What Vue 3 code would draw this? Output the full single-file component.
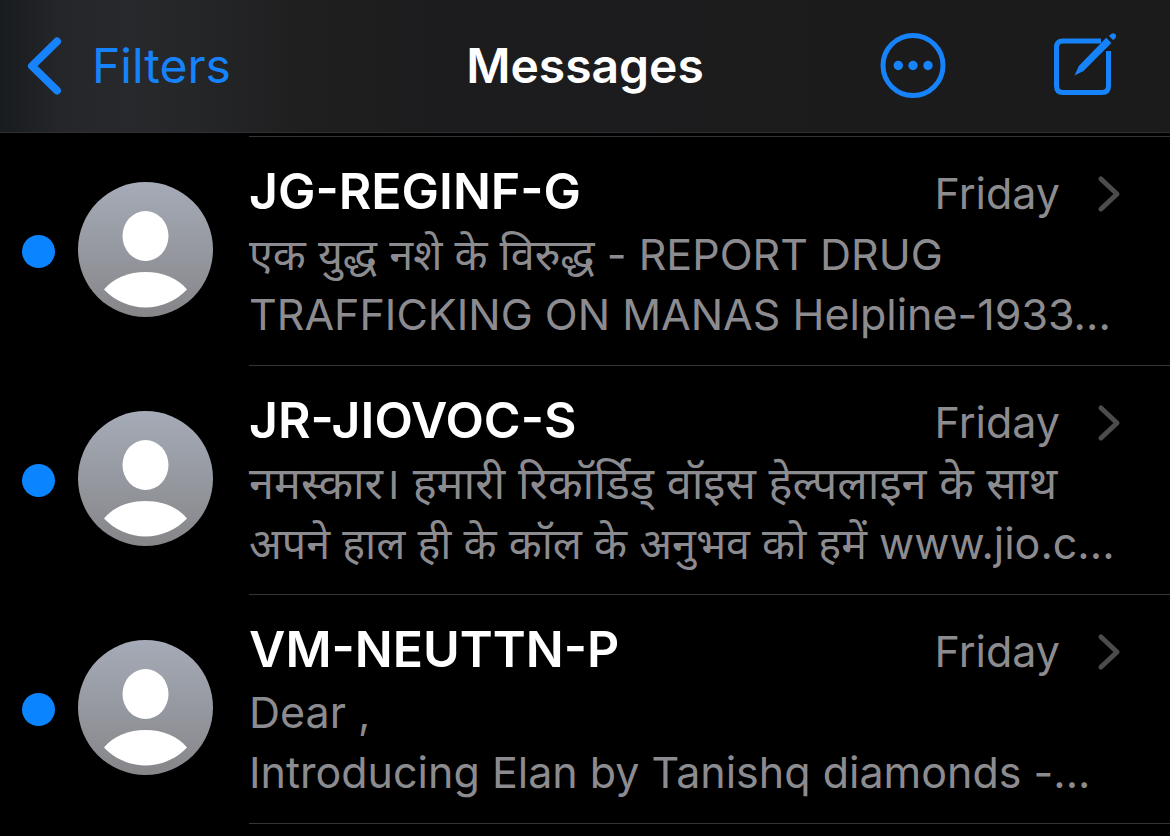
<script setup>
const conversations = [
  {
    sender: 'JG-REGINF-G',
    day: 'Friday',
    lines: [
      { text: 'एक युद्ध नशे के विरुद्ध - REPORT DRUG' },
      { text: 'TRAFFICKING ON MANAS Helpline-1933...' },
    ],
  },
  {
    sender: 'JR-JIOVOC-S',
    day: 'Friday',
    lines: [
      { text: 'नमस्कार। हमारी रिकॉर्डिड् वॉइस हेल्पलाइन के साथ', lang: 'hi' },
      { text: 'अपने हाल ही के कॉल के अनुभव को हमें www.jio.c...' },
    ],
  },
  {
    sender: 'VM-NEUTTN-P',
    day: 'Friday',
    lines: [{ text: 'Dear ,' }, { text: 'Introducing Elan by Tanishq diamonds -...' }],
  },
]
</script>

<template>
  <div class="screen">
    <header class="bar">
      <button class="back" type="button">
        <svg class="back-icon" width="36" height="60" viewBox="0 0 36 60" aria-hidden="true">
          <path d="M31 5.500 6 30 31 54.500" />
        </svg>
        <span>Filters</span>
      </button>
      <h1 class="title">Messages</h1>
      <div class="actions">
        <button class="action" type="button" aria-label="More options">
          <svg width="66" height="66" viewBox="0 0 66 66" aria-hidden="true">
            <circle class="outline" cx="33" cy="32.500" r="30" />
            <circle class="solid" cx="18.300" cy="32.500" r="4.700" />
            <circle class="solid" cx="33" cy="32.500" r="4.700" />
            <circle class="solid" cx="48" cy="32.500" r="4.700" />
          </svg>
        </button>
        <button class="action" type="button" aria-label="New message">
          <svg width="66" height="66" viewBox="0 0 66 66" aria-hidden="true">
            <path class="outline" d="M48 8H10Q3.500 8 3.500 14.500V53Q3.500 59.500 10 59.500H49Q55.500 59.500 55.500 53V18" />
            <path class="solid" d="M53.200 4.800 58.400 10 30.500 38 21.500 42.500 25.800 33Z" />
            <path class="solid" d="M56 3 58.500 .700Q60.500-.500 62.200 1.200 63.800 3 62.600 4.800L60.300 7.300Z" />
          </svg>
        </button>
      </div>
    </header>

    <ul class="list">
      <li v-for="item in conversations" :key="item.sender">
        <a class="row" href="#">
          <span class="unread" aria-label="Unread"></span>
          <svg class="avatar" width="135" height="135" viewBox="0 0 135 135" aria-hidden="true">
            <defs>
              <linearGradient :id="'shade-' + item.sender" x1="0" y1="0" x2="0" y2="1">
                <stop offset="0" stop-color="#a5abb7" />
                <stop offset="1" stop-color="#868689" />
              </linearGradient>
            </defs>
            <circle cx="67.500" cy="67.500" r="67.500" :fill="'url(#shade-' + item.sender + ')'" />
            <ellipse cx="67.500" cy="54" rx="23" ry="25" fill="#fff" />
            <path d="M26 107.500C35 96 51 90 67.500 90S100 96 109 107.500C98 119 83 125.500 67.500 125.500S37 119 26 107.500Z" fill="#fff" />
          </svg>
          <span class="content">
            <span class="heading">
              <strong class="sender">{{ item.sender }}</strong>
              <span class="day">{{ item.day }}</span>
              <svg class="chevron" width="24" height="38" viewBox="0 0 24 38" aria-hidden="true">
                <path d="M4 4 20 19 4 34" />
              </svg>
            </span>
            <span v-for="line in item.lines" :key="line.text" class="line" :lang="line.lang">{{ line.text }}</span>
          </span>
        </a>
      </li>
    </ul>
  </div>
</template>

<style>
body {
  background: #000;
}
</style>

<style scoped>
.screen {
  min-height: 100vh;
  background: #000;
  color: #fff;
  font-family: Inter, "Noto Sans", "Noto Sans Devanagari", sans-serif;
  overflow-x: hidden;
}

.bar {
  display: grid;
  grid-template-columns: 1fr auto 1fr;
  align-items: center;
  height: 132px;
  padding: 0 26px;
  border-bottom: 1px solid #303032;
  background: linear-gradient(90deg, #181b1f 0, #242629 60px, #28292c 130px, #252628 190px, #1f1f20 300px, #1c1c1e 450px, #1b1b1c 100%);
}

button {
  display: flex;
  align-items: center;
  padding: 0;
  border: 0;
  background: none;
  color: #1683fb;
  font: inherit;
}

.back {
  gap: 30px;
  font-size: 48px;
  line-height: 60px;
}

.back-icon path {
  fill: none;
  stroke: currentColor;
  stroke-width: 8;
  stroke-linecap: round;
  stroke-linejoin: round;
}

.title {
  margin: 0;
  font-size: 48px;
  line-height: 60px;
  font-weight: 600;
}

.actions {
  display: flex;
  justify-content: flex-end;
  gap: 107px;
  padding-right: 25px;
}

.outline {
  fill: none;
  stroke: currentColor;
  stroke-width: 5;
}

.solid {
  fill: currentColor;
}

.list {
  margin: 0;
  padding: 3px 0 0;
  list-style: none;
}

.row {
  display: flex;
  align-items: center;
  padding-left: 22px;
  color: inherit;
  text-decoration: none;
}

.unread {
  flex: none;
  width: 33px;
  height: 33px;
  margin-right: 23px;
  border-radius: 50%;
  background: #0a84ff;
}

.avatar {
  flex: none;
  margin: 0 36px 4px 0;
}

.content {
  flex: 1;
  min-width: 0;
  padding: 24px 49px 21px 0;
  border-bottom: 1px solid #343436;
}

li:first-child .content {
  border-top: 1px solid #343436;
}

.heading {
  display: flex;
  align-items: baseline;
  height: 60px;
  margin-bottom: 3px;
  line-height: 60px;
}

.sender {
  flex: 1;
  font-size: 50px;
  font-weight: 600;
}

.day {
  margin-right: 37px;
  color: #8c8c90;
  font-size: 43px;
}

.chevron {
  flex: none;
  align-self: flex-end;
  margin-bottom: 8px;
}

.chevron path {
  fill: none;
  stroke: #4c4c4e;
  stroke-width: 5;
  stroke-linecap: round;
  stroke-linejoin: round;
}

.line {
  display: block;
  height: 60px;
  color: #8c8c90;
  font-size: 43px;
  line-height: 60px;
  white-space: nowrap;
}

.line:lang(hi) {
  font-size: 45px;
}
</style>
